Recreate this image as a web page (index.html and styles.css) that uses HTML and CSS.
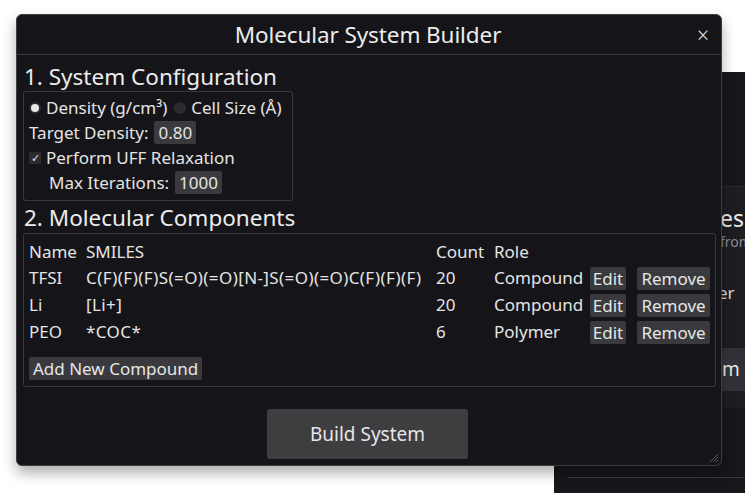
FILE: index.html
```html
<!DOCTYPE html>
<html>
<head>
<meta charset="utf-8">
<link rel="stylesheet" href="styles.css">
</head>
<body>
<div class="bgwin">
  <div class="bg-pane">
    <div class="bg-title">es</div>
    <div class="bg-sub">from</div>
    <div class="bg-lbl">er</div>
    <div class="bg-btn">m</div>
  </div>
  <div class="bg-line"></div>
</div>

<div class="dialog">
  <div class="titlebar">
    <span class="title">Molecular System Builder</span>
    <span class="close">×</span>
  </div>
  <div class="content">
    <h2 class="heading">1. System Configuration</h2>
    <div class="group config">
      <div class="row">
        <span class="radio on"></span><span>Density (g/cm³)</span>
        <span class="radio off"></span><span>Cell Size (Å)</span>
      </div>
      <div class="row">
        <span>Target Density:</span><span class="field">0.80</span>
      </div>
      <div class="row">
        <span class="check">✓</span><span>Perform UFF Relaxation</span>
      </div>
      <div class="row indent">
        <span>Max Iterations:</span><span class="field">1000</span>
      </div>
    </div>

    <h2 class="heading h2b">2. Molecular Components</h2>
    <div class="group comps">
      <div class="trow head">
        <span class="c-name">Name</span><span class="c-smi">SMILES</span><span class="c-cnt">Count</span><span class="c-role">Role</span>
      </div>
      <div class="trow">
        <span class="c-name">TFSI</span><span class="c-smi">C(F)(F)(F)S(=O)(=O)[N-]S(=O)(=O)C(F)(F)(F)</span><span class="c-cnt">20</span><span class="c-role">Compound</span>
        <span class="btn edit">Edit</span><span class="btn remove">Remove</span>
      </div>
      <div class="trow">
        <span class="c-name">Li</span><span class="c-smi">[Li+]</span><span class="c-cnt">20</span><span class="c-role">Compound</span>
        <span class="btn edit">Edit</span><span class="btn remove">Remove</span>
      </div>
      <div class="trow">
        <span class="c-name">PEO</span><span class="c-smi">*COC*</span><span class="c-cnt">6</span><span class="c-role">Polymer</span>
        <span class="btn edit">Edit</span><span class="btn remove">Remove</span>
      </div>
      <div class="addrow"><span class="btn add">Add New Compound</span></div>
    </div>

    <div class="footer">
      <span class="build">Build System</span>
    </div>
  </div>
  <svg class="grip" width="12" height="12" viewBox="0 0 12 12">
    <path d="M11 3 L3 11 M11 6 L6 11 M11 9 L9 11" stroke="#5a5a60" stroke-width="1"/>
  </svg>
</div>
</body>
</html>
```

FILE: styles.css
```css
html, body {
  margin: 0;
  padding: 0;
  background: #ffffff;
  width: 745px;
  height: 493px;
  overflow: hidden;
  position: relative;
  font-family: "Noto Sans", "Open Sans", sans-serif;
  color: #e4e4e4;
}

.bgwin {
  position: absolute;
  left: 554px;
  top: 72px;
  width: 200px;
  height: 430px;
  background: #17171b;
}
.bg-pane {
  position: absolute;
  left: 150px;
  top: 114px;
  width: 60px;
  height: 221px;
  background: #1d1d22;
  border-top: 1px solid #2a2a30;
}
.bg-title {
  position: absolute;
  left: 16px;
  top: 19px;
  font-size: 23px;
  line-height: 24px;
  color: #e8e8e8;
}
.bg-sub {
  position: absolute;
  left: 16px;
  top: 47px;
  font-size: 14px;
  line-height: 16px;
  color: #8a8a90;
}
.bg-lbl {
  position: absolute;
  left: 14px;
  top: 96px;
  font-size: 17px;
  line-height: 20px;
  color: #dcdcdc;
}
.bg-btn {
  position: absolute;
  left: 0;
  top: 161px;
  width: 60px;
  height: 43px;
  background: linear-gradient(90deg, #3a3a40, #2a2a30);
  font-size: 19px;
  line-height: 43px;
  padding-left: 18px;
  box-sizing: border-box;
  color: #e8e8e8;
}
.bg-line {
  position: absolute;
  left: 13px;
  top: 405px;
  width: 200px;
  height: 1px;
  background: #3a3a40;
}

.dialog {
  position: absolute;
  left: 16px;
  top: 14px;
  width: 704px;
  height: 450px;
  background: #151519;
  border: 1px solid #3c3c42;
  border-radius: 6px;
  box-shadow: 0 7px 14px rgba(0,0,0,0.32);
  display: flex;
  flex-direction: column;
}
.titlebar {
  height: 39px;
  border-bottom: 1px solid #35353a;
  display: flex;
  align-items: center;
  justify-content: center;
  position: relative;
}
.title {
  font-size: 22.5px;
  color: #ececec;
  letter-spacing: -0.1px;
  padding-right: 2px;
}
.close {
  position: absolute;
  right: 12px;
  top: 6px;
  font-size: 21px;
  font-weight: 300;
  color: #e0e0e0;
}
.content {
  padding: 0 5px 0 6px;
  display: flex;
  flex-direction: column;
  flex: 1;
}
.heading {
  margin: 0;
  font-weight: normal;
  font-size: 22.5px;
  line-height: 27px;
  height: 27px;
  margin-top: 8px;
  margin-bottom: 1px;
  padding-left: 1px;
  color: #ececec;
  white-space: nowrap;
}
.h2b {
  margin-top: 3px;
  margin-bottom: 2px;
}
.group {
  border: 1px solid #38383e;
  border-radius: 3px;
  font-size: 17px;
}
.config {
  width: 258px;
  display: flex;
  flex-direction: column;
  gap: 2px;
  padding: 4px 5px 6px 5px;
}
.row {
  display: flex;
  align-items: center;
  height: 23px;
  gap: 5px;
  white-space: nowrap;
}
.indent {
  padding-left: 20px;
}
.radio {
  width: 12px;
  height: 12px;
  border-radius: 50%;
  background: #2b2b30;
  position: relative;
  flex: none;
}
.radio.on::after {
  content: "";
  position: absolute;
  left: 2px;
  top: 2px;
  width: 8px;
  height: 8px;
  border-radius: 50%;
  background: #e8e8e8;
}
.radio.off {
  margin-left: 2px;
}
.check {
  width: 12px;
  height: 12px;
  background: #2b2b30;
  font-size: 11px;
  line-height: 12px;
  text-align: center;
  flex: none;
  color: #e8e8e8;
}
.field {
  background: #3a3a3e;
  padding: 0 4px;
  height: 23px;
  line-height: 23px;
  border-radius: 2px;
  margin-left: 1px;
}
.comps {
  display: flex;
  flex-direction: column;
  padding: 5px 5px 6px 5px;
}
.trow {
  display: flex;
  align-items: flex-start;
  height: 27px;
  white-space: nowrap;
}
.trow span {
  line-height: 25px;
}
.trow.head {
  height: 26px;
}
.c-name { width: 57px; flex: none; }
.c-smi { width: 350px; flex: none; letter-spacing: 0.4px; }
.trow.head .c-smi { letter-spacing: 0; }
.c-cnt { width: 58px; flex: none; }
.c-role { width: 96px; flex: none; }
.btn {
  background: #3a3a3e;
  border-radius: 2px;
  height: 23px;
  line-height: 23px !important;
  margin-top: 2px;
  color: #e6e6e6;
  font-size: 17px;
}
.edit { width: 36px; text-align: center; }
.remove { margin-left: 11px; width: 73px; text-align: center; }
.addrow {
  margin-top: 11px;
  display: flex;
}
.add {
  padding: 0 4px;
  margin-top: 0;
}
.footer {
  display: flex;
  justify-content: center;
  margin-top: 22px;
  padding-right: 4px;
}
.build {
  width: 201px;
  height: 50px;
  line-height: 50px;
  text-align: center;
  background: #3e3e40;
  border-radius: 3px;
  font-size: 19px;
  color: #e6e6e6;
}
.grip {
  position: absolute;
  right: 2px;
  bottom: 2px;
}
```
